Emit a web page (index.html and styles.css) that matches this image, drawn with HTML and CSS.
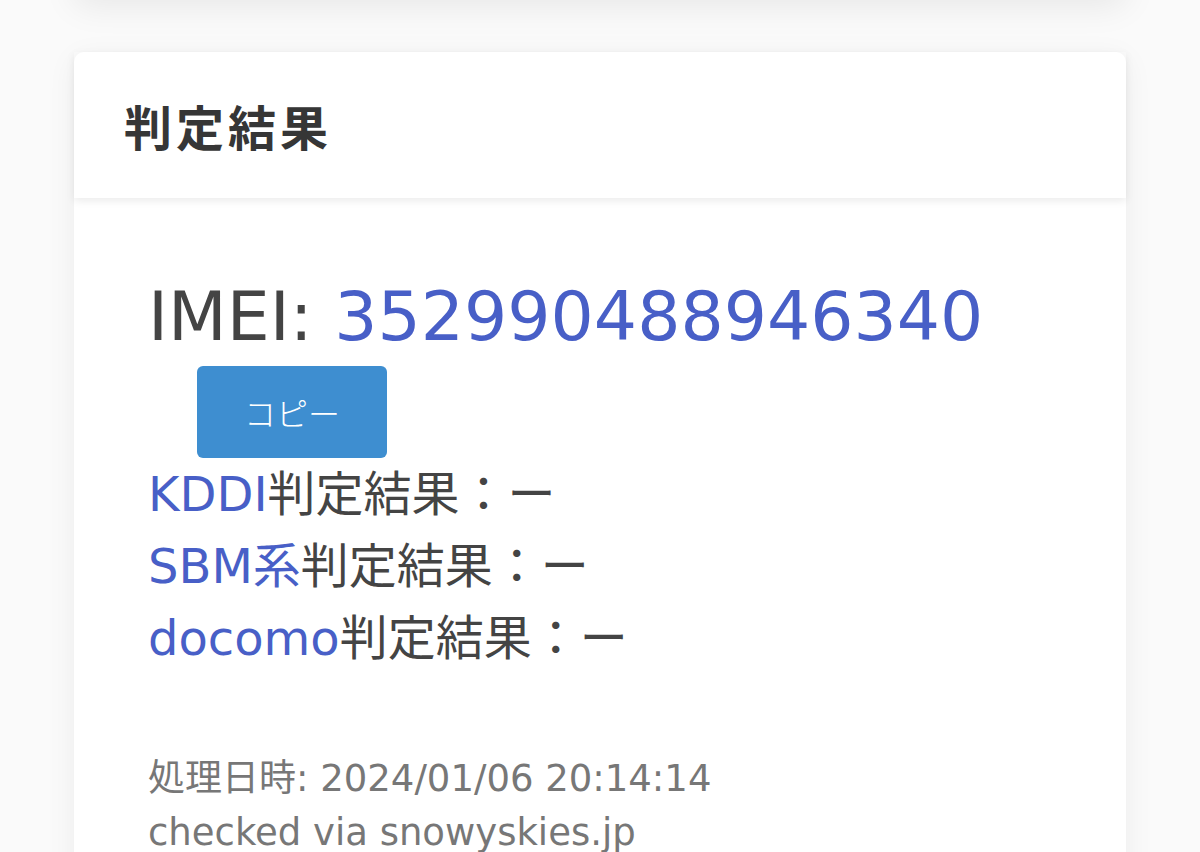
FILE: index.html
```html
<!DOCTYPE html>
<html lang="ja">
<head>
    <meta charset="UTF-8">
    <meta name="viewport" content="width=device-width, initial-scale=1.0">
    <title>判定結果</title>
    <link rel="stylesheet" href="styles.css">
</head>
<body>
    <div class="page">
        <div class="card card-prev"></div>

        <div class="card result">
            <header class="card-header">
                <h2>判定結果</h2>
            </header>
            <div class="card-body">
                <p class="imei">IMEI: <span class="num">352990488946340</span></p>
                <button class="copy-btn" type="button">コピー</button>
                <ul class="carriers">
                    <li><span class="carrier">KDDI</span>判定結果：ー</li>
                    <li><span class="carrier">SBM系</span>判定結果：ー</li>
                    <li><span class="carrier">docomo</span>判定結果：ー</li>
                </ul>
                <p class="meta">処理日時: 2024/01/06 20:14:14<br>checked via snowyskies.jp</p>
            </div>
        </div>
    </div>
</body>
</html>
```

FILE: styles.css
```css
body {
    margin: 0;
    padding: 0;
    background: #fafafa;
    font-family: "DejaVu Sans", "Noto Sans CJK JP", sans-serif;
    color: #444;
    overflow: hidden;
}

.page {
    padding: 0 74px;
}

.card {
    background: #fff;
    border-radius: 10px;
    box-shadow: 0 6px 30px rgba(0, 0, 0, 0.06);
}

/* bottom of the card above, mostly off screen */
.card-prev {
    height: 120px;
    margin-top: -124px;
    margin-bottom: 56px;
    box-shadow: 0 10px 34px rgba(0, 0, 0, 0.08);
}

.card-header {
    height: 146px;
    display: flex;
    align-items: center;
    padding: 0 50px;
    box-shadow: 0 3px 8px rgba(0, 0, 0, 0.08);
    position: relative;
}

.card-header h2 {
    margin: 0;
    font-family: "Noto Sans CJK JP", sans-serif;
    font-size: 48px;
    font-weight: 700;
    letter-spacing: 4px;
    color: #363636;
}

.card-body {
    padding: 78px 74px 40px;
}

.imei {
    margin: 0;
    font-size: 68px;
    line-height: 1.2;
    color: #444;
}

.imei .num {
    color: #485fc7;
}

.copy-btn {
    margin: 8px 0 0 49px;
    width: 190px;
    height: 92px;
    border: none;
    border-radius: 6px;
    background: #3e8ed0;
    color: #fff;
    font-family: "Noto Sans CJK JP", sans-serif;
    font-size: 32px;
    font-weight: 300;
}

.carriers {
    list-style: none;
    margin: 0;
    padding: 0;
    font-size: 48px;
    line-height: 72px;
    color: #444;
}

.carrier {
    color: #485fc7;
}

.meta {
    margin: 78px 0 0;
    font-size: 37px;
    line-height: 54px;
    color: #777;
}
```
